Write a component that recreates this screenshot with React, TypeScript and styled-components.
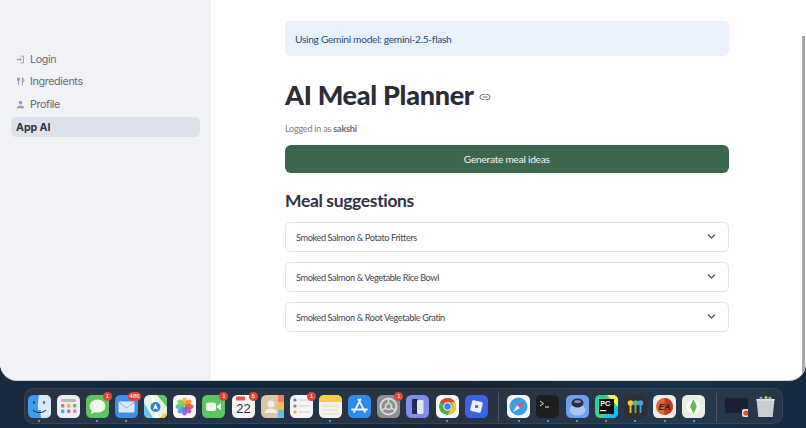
import React from "react";
import styled, { createGlobalStyle } from "styled-components";

const Global = createGlobalStyle`
  html, body { margin: 0; padding: 0; width: 806px; height: 428px; overflow: hidden; background: #16263a; }
  * { box-sizing: border-box; }
`;
const Desktop = styled.div`
  width: 806px; height: 428px; display: flex; flex-direction: column; overflow: hidden;
  background: linear-gradient(100deg, #1c2a3a 0%, #0f2740 35%, #1a2530 60%, #12324c 85%, #15293d 100%);
`;
const Window = styled.div`
  height: 380px; display: flex; background: #fff; border-radius: 0 0 17px 17px; overflow: hidden;
  box-shadow: 0 1px 0 #cfd2d6; position: relative;
`;
const Sidebar = styled.nav`
  width: 211px; background: #f0f2f6; padding: 49px 11px 0; display: flex; flex-direction: column; gap: 2.7px;
  font-family: "Inter", "Noto Sans", sans-serif;
`;
const NavItem = styled.div<{ $active?: boolean }>`
  height: 20px; display: flex; align-items: center; gap: 5px; padding-left: 5px; border-radius: 5px;
  font-size: 10.7px; letter-spacing: ${p => (p.$active ? "-0.1px" : "-0.35px")}; color: ${p => (p.$active ? "#31333f" : "#696b74")}; font-weight: ${p => (p.$active ? 700 : 400)};
  background: ${p => (p.$active ? "#dde1ec" : "transparent")};
`;
const NavIcon = styled.svg`width: 9px; height: 9px; flex: none; color: #9a9ca3;`;
const Main = styled.main`
  flex: 1; padding: 21px 0 0 74px; display: flex; flex-direction: column; font-family: "Lato", sans-serif; color: #31333f;
`;
const Content = styled.div`width: 443.5px; display: flex; flex-direction: column;`;
const Alert = styled.div`
  height: 35px; background: #e9f1fb; border-radius: 5px; display: flex; align-items: center; padding-left: 10px;
  color: #274b7c; font-size: 10.2px; letter-spacing: -0.3px;
`;
const TitleRow = styled.div`display: flex; align-items: center; gap: 5px; margin-top: 20px; height: 38px;`;
const Title = styled.h1`margin: 0; font-size: 27px; font-weight: 900; letter-spacing: -0.3px; line-height: 38px; color: #2b2d38;`;
const LinkGlyph = styled.svg`width: 12px; height: 12px; color: #6e7079; margin-top: 4px;`;
const Caption = styled.p`margin: 8px 0 0; height: 14px; line-height: 14px; font-size: 9px; letter-spacing: -0.2px; color: #7c7e86; b { font-weight: 700; color: #6a6c75; }`;
const Primary = styled.button`
  margin-top: 9px; height: 28px; border: 0; border-radius: 6px; background: #3d674d; color: #f2f5f2;
  font-family: inherit; font-size: 10.2px; letter-spacing: -0.27px; padding: 0;
`;
const Heading = styled.h2`margin: 16px 0 9px; font-size: 17.5px; font-weight: 700; letter-spacing: -0.35px; line-height: 24px; color: #31333f;`;
const List = styled.div`display: flex; flex-direction: column; gap: 10px;`;
const Row = styled.div`
  height: 30px; border: 1px solid #e3e4e8; border-radius: 5px; display: flex; align-items: center; justify-content: space-between;
  padding: 0 12px 0 10px; font-size: 9.2px; letter-spacing: -0.4px; color: #44464f;
`;
const Chevron = styled.svg`width: 9px; height: 9px; color: #4a4c55; margin-top: -1px;`;
const Scrollbar = styled.div`position: absolute; right: 1px; top: 36px; bottom: 0; width: 3px; background: #a9a9ab;`;

const DockArea = styled.div`flex: 1; display: flex; justify-content: center; padding-top: 8px;`;
const Dock = styled.div`
  width: 759px; height: 36px; border-radius: 9px; background: rgba(50,62,78,.62); box-shadow: inset 0 0 0 1px rgba(255,255,255,.07);
  display: flex; align-items: flex-start; padding: 7px 0 0 1px;
`;
const Slot = styled.div`
  width: 29.15px; display: flex; flex-direction: column; align-items: center; position: relative; flex: none;
`;
const Dot = styled.i<{ $on?: boolean }>`width: 2px; height: 2px; border-radius: 50%; margin-top: 2px; background: ${p => (p.$on ? "#9fa6ae" : "transparent")};`;
const Badge = styled.span`
  position: absolute; top: -3px; right: 0px; min-width: 9px; height: 9px; padding: 0 1.5px; border-radius: 5px; background: #e0453a; color: #fff;
  font: 6px/9px "Liberation Sans", sans-serif; text-align: center;
`;
const Divider = styled.div`width: 1px; height: 29px; margin: -2px 5px 0 7.5px; background: rgba(255,255,255,.17); flex: none;`;

const Tile: React.FC<{ bg: string; children?: React.ReactNode }> = ({ bg, children }) => (
  <svg width="23" height="23" viewBox="0 0 23 23">
    <rect width="23" height="23" rx="5.2" fill={bg} />
    {children}
  </svg>
);

const icons: Record<string, React.ReactNode> = {
  finder: <Tile bg="#3d9bf0"><path d="M11 0h7a5 5 0 0 1 5 5v13a5 5 0 0 1-5 5h-5c-.6-4-.6-6 0-8h-3c-.3-6 .2-10 1-15z" fill="#dbeafb"/><path d="M6 6v3M16 6v3" stroke="#123" strokeWidth="1.1"/><path d="M5 15c4 3.5 9 3.5 13 0" stroke="#123" fill="none"/></Tile>,
  launchpad: <Tile bg="#eceef0"><rect x="4" y="4" width="15" height="3" rx="1" fill="#b9b9bd"/>{[["#ef6a5b",4],["#f3b23f",10],["#6bc06a",16]].map(([c,x]) => <rect key={String(x)} x={x as number} y="9" width="3.4" height="3.4" rx="1" fill={c as string}/>)}{[["#5a9cf0",4],["#a777e0",10],["#ef79a8",16]].map(([c,x]) => <rect key={String(x)} x={x as number} y="14.5" width="3.4" height="3.4" rx="1" fill={c as string}/>)}</Tile>,
  messages: <Tile bg="#5cc460"><ellipse cx="11.5" cy="11" rx="8" ry="6.6" fill="#edf8ea"/><path d="M6 15l-1 4 4-2z" fill="#edf8ea"/></Tile>,
  mail: <Tile bg="#3f8fe8"><rect x="3.5" y="6.5" width="16" height="11" rx="1" fill="#dceafa"/><path d="M3.5 7l8 6 8-6" stroke="#7eaee6" fill="none"/></Tile>,
  maps: <Tile bg="#e9f3e2"><path d="M13 0h5a5 5 0 0 1 5 5v7z" fill="#62c46e"/><path d="M0 8l9 15H5a5 5 0 0 1-5-5z" fill="#68c6ee"/><path d="M16 23l4-5 3 1c0 2-2 4-4 4z" fill="#f4cf4f"/><path d="M8 0l5 23" stroke="#fff" strokeWidth="3"/><circle cx="11.5" cy="12" r="5" fill="#2f7de0"/><path d="M11.5 8.5l2.6 6.2-2.6-1.2-2.6 1.2z" fill="#fff"/></Tile>,
  photos: <Tile bg="#f7f7f7">{[["#f4b93c",0],["#f08a33",45],["#e4524b",90],["#c44aa0",135],["#8a5bd6",180],["#4f8fe6",225],["#4fbfa0",270],["#8ccb4c",315]].map(([c,a]) => <ellipse key={String(a)} cx="11.5" cy="6.8" rx="2.6" ry="4.2" fill={c as string} opacity=".9" transform={`rotate(${a} 11.5 11.5)`}/>)}</Tile>,
  facetime: <Tile bg="#5ac562"><rect x="4" y="7.5" width="10" height="8.5" rx="2" fill="#eaf8e8"/><path d="M15 11l4-3v7.5l-4-3z" fill="#eaf8e8"/></Tile>,
  calendar: <Tile bg="#f6f6f6"><rect x="4" y="1.5" width="9" height="4" rx="1" fill="#e2564c"/><text x="11.5" y="18" textAnchor="middle" fontFamily="Liberation Sans" fontSize="13" fill="#333">22</text></Tile>,
  contacts: <Tile bg="#d9c6a6"><rect x="17" width="6" height="7" fill="#ef7f5f"/><rect x="17" y="7" width="6" height="8" fill="#f2c052"/><rect x="17" y="15" width="6" height="8" fill="#69bfe0"/><circle cx="10" cy="9" r="3.6" fill="#f3efe8"/><path d="M3.5 18c1-6 12-6 13 0z" fill="#f3efe8"/></Tile>,
  reminders: <Tile bg="#f5f5f5">{[["#3f82e8",5],["#e6594b",11],["#f0a23a",17]].map(([c,y]) => <g key={String(y)}><circle cx="5" cy={y as number} r="1.6" fill={c as string}/><rect x="9" y={(y as number)-.5} width="11" height="1" fill="#cfcfd2"/></g>)}</Tile>,
  notes: <Tile bg="#f4f2ea"><path d="M0 7V5a5 5 0 0 1 5-5h13a5 5 0 0 1 5 5v2z" fill="#f7cf4a"/><path d="M3 11h17M3 15h17M3 19h17" stroke="#d5d3cc" strokeWidth=".7"/></Tile>,
  appstore: <Tile bg="#2d8bee"><path d="M12.5 4.5L6 17M10.5 4.5L17 17M4 14.5h15" stroke="#eaf4fe" strokeWidth="1.8" strokeLinecap="round"/></Tile>,
  settings: <Tile bg="#8d8f93"><circle cx="11.5" cy="11.5" r="8" fill="none" stroke="#d7d8da" strokeWidth="2"/><circle cx="11.5" cy="11.5" r="3" fill="none" stroke="#d7d8da" strokeWidth="1.6"/><path d="M11.5 3.5v5M5 15l4-2M18 15l-4-2" stroke="#d7d8da" strokeWidth="1.4"/></Tile>,
  mirror: <Tile bg="#7f8fe8"><rect x="6" y="4" width="6" height="15" rx="1.2" fill="#232a55"/><rect x="11" y="5" width="6.5" height="14" rx="1.2" fill="#dfe6f7"/></Tile>,
  chrome: <Tile bg="#f6f6f6"><circle cx="11.5" cy="11.5" r="8.5" fill="#4caf50"/><path d="M11.5 3a8.5 8.5 0 0 1 7.4 4.3H11.5a4.3 4.3 0 0 0-3.9 2.6L4.3 7A8.5 8.5 0 0 1 11.5 3z" fill="#e5463a"/><path d="M18.9 7.3A8.5 8.5 0 0 1 11.5 20l3.7-6.3a4.3 4.3 0 0 0 0-6.4z" fill="#f7c533"/><circle cx="11.5" cy="11.5" r="4.2" fill="#fff"/><circle cx="11.5" cy="11.5" r="3.2" fill="#3f83ea"/></Tile>,
  roblox: <Tile bg="#3c62e4"><rect x="6" y="6" width="11" height="11" rx="1.6" fill="#eef2fd" transform="rotate(14 11.5 11.5)"/><rect x="10" y="10" width="3" height="3" fill="#3c62e4" transform="rotate(14 11.5 11.5)"/></Tile>,
  safari: <Tile bg="#f4f6f8"><circle cx="11.5" cy="11.5" r="9" fill="#3f9bf0"/><path d="M17 6l-7 4 3 3z" fill="#ea5249"/><path d="M6 17l4-7 3 3z" fill="#f1f4f7"/></Tile>,
  terminal: <Tile bg="#1d1e20"><path d="M4 6l3.5 2.5L4 11" stroke="#e6e6e6" fill="none"/><path d="M9 12h4" stroke="#e6e6e6"/></Tile>,
  sequel: <Tile bg="#6ea0ee"><ellipse cx="11.5" cy="15" rx="8" ry="5.5" fill="#a9c9f5"/><ellipse cx="11.5" cy="8" rx="6" ry="4.6" fill="#26303e"/><ellipse cx="11.5" cy="6.5" rx="3.5" ry="1.6" fill="#7e8ea3"/></Tile>,
  pycharm: <Tile bg="#3ecf8e"><path d="M0 5a5 5 0 0 1 5-5h8L0 13z" fill="#21d789"/><path d="M23 5a5 5 0 0 0-5-5h-6l11 12z" fill="#fcf84a"/><path d="M23 11v7a5 5 0 0 1-5 5H8z" fill="#07c3f2"/><rect x="4" y="4" width="15" height="15" fill="#111"/><text x="5.2" y="11.4" fontFamily="Liberation Sans" fontWeight="700" fontSize="7.4" fill="#fff">PC</text><rect x="5.2" y="15" width="6" height="1.2" fill="#fff"/></Tile>,
  keychain: <Tile bg="#2f2f33"><circle cx="6.5" cy="8" r="2.8" fill="#edc53f"/><path d="M6.5 10v8" stroke="#edc53f" strokeWidth="1.8"/><circle cx="11.5" cy="8" r="2.8" fill="#5bb07c"/><path d="M11.5 10v8" stroke="#5bb07c" strokeWidth="1.8"/><circle cx="16.5" cy="8" r="2.8" fill="#4e9ee6"/><path d="M16.5 10v8" stroke="#4e9ee6" strokeWidth="1.8"/></Tile>,
  ea: <Tile bg="#ececea"><circle cx="11.5" cy="11.5" r="8.5" fill="#e0682c"/><path d="M11.5 3a8.5 8.5 0 0 1 0 17z" fill="#bf3c22"/><text x="11.5" y="14.5" textAnchor="middle" fontFamily="Liberation Sans" fontWeight="700" fontStyle="italic" fontSize="8.5" fill="#26201c">EA</text></Tile>,
  sims: <Tile bg="#e9eee2"><circle cx="11.5" cy="11.5" r="7" fill="#fff"/><path d="M11.5 4l3.4 7.5-3.4 7.5-3.4-7.5z" fill="#72b652"/></Tile>,
  trash: <svg width="23" height="23" viewBox="0 0 23 23"><path d="M2.5 4h18l-1.8 18H4.3z" fill="#c9ccd0"/><path d="M2.5 4h18v1.5H2.5z" fill="#e6e8ea"/><circle cx="7" cy="3" r="1.6" fill="#6ab0de"/><circle cx="12" cy="2.5" r="1.6" fill="#e8b06a"/><circle cx="16" cy="3" r="1.6" fill="#7fc4a0"/></svg>,
};

type D = { k: string; on?: boolean; b?: string };
const groupA: D[] = [
  { k: "finder", on: true }, { k: "launchpad" }, { k: "messages", on: true, b: "1" }, { k: "mail", on: true, b: "486" },
  { k: "maps" }, { k: "photos" }, { k: "facetime", b: "1" }, { k: "calendar", b: "6" }, { k: "contacts" },
  { k: "reminders", b: "1" }, { k: "notes", on: true }, { k: "appstore" }, { k: "settings", b: "1" }, { k: "mirror" },
  { k: "chrome", on: true }, { k: "roblox" },
];
const groupB: D[] = [
  { k: "safari", on: true }, { k: "terminal", on: true }, { k: "sequel", on: true }, { k: "pycharm", on: true },
  { k: "keychain", on: true }, { k: "ea", on: true }, { k: "sims", on: true },
];
const DockItem: React.FC<D> = ({ k, on, b }) => (
  <Slot>
    {icons[k]}
    {b && <Badge>{b}</Badge>}
    <Dot $on={on} />
  </Slot>
);

const meals = ["Smoked Salmon & Potato Fritters", "Smoked Salmon & Vegetable Rice Bowl", "Smoked Salmon & Root Vegetable Gratin"];

export default function App() {
  return (
    <Desktop>
      <Global />
      <Window>
        <Sidebar>
          <NavItem>
            <NavIcon viewBox="0 0 12 12" fill="none" stroke="currentColor" strokeWidth="1.2"><path d="M6 1.5h4v9H6M1 6h6M5 4l2 2-2 2" /></NavIcon>Login
          </NavItem>
          <NavItem>
            <NavIcon viewBox="0 0 12 12" fill="none" stroke="currentColor" strokeWidth="1.3"><path d="M2 1v3.5c0 1 2.6 1 2.6 0V1M3.3 1v10M8.5 11V1c1.5.5 2 2.5 2 5H8.5" /></NavIcon>Ingredients
          </NavItem>
          <NavItem>
            <NavIcon viewBox="0 0 12 12" fill="currentColor"><circle cx="6" cy="3.5" r="2.4" /><path d="M1 11c0-5 10-5 10 0z" /></NavIcon>Profile
          </NavItem>
          <NavItem $active>App AI</NavItem>
        </Sidebar>
        <Main>
          <Content>
            <Alert>Using Gemini model: gemini-2.5-flash</Alert>
            <TitleRow>
              <Title>AI Meal Planner</Title>
              <LinkGlyph viewBox="0 0 24 24" fill="none" stroke="currentColor" strokeWidth="2" strokeLinecap="round"><path d="M10 7H7a5 5 0 0 0 0 10h3M14 7h3a5 5 0 0 1 0 10h-3M8 12h8" /></LinkGlyph>
            </TitleRow>
            <Caption>Logged in as <b>sakshi</b></Caption>
            <Primary>Generate meal ideas</Primary>
            <Heading>Meal suggestions</Heading>
            <List>
              {meals.map(m => (
                <Row key={m}>
                  {m}
                  <Chevron viewBox="0 0 12 12" fill="none" stroke="currentColor" strokeWidth="1.6" strokeLinecap="round" strokeLinejoin="round"><path d="M2 4l4 4 4-4" /></Chevron>
                </Row>
              ))}
            </List>
          </Content>
        </Main>
        <Scrollbar />
      </Window>
      <DockArea>
        <Dock>
          {groupA.map(d => <DockItem key={d.k} {...d} />)}
          <Divider />
          {groupB.map(d => <DockItem key={d.k} {...d} />)}
          <Divider />
          <Slot>
            <svg width="23" height="23" viewBox="0 0 23 23"><rect x="0" y="3" width="25" height="15" fill="#1a2036" /><rect x="17" y="14" width="8" height="8" rx="2" fill="#e8e0d8" /><circle cx="21" cy="18" r="2.6" fill="#d9542c" /></svg>
          </Slot>
          <Slot>{icons.trash}</Slot>
        </Dock>
      </DockArea>
    </Desktop>
  );
}
